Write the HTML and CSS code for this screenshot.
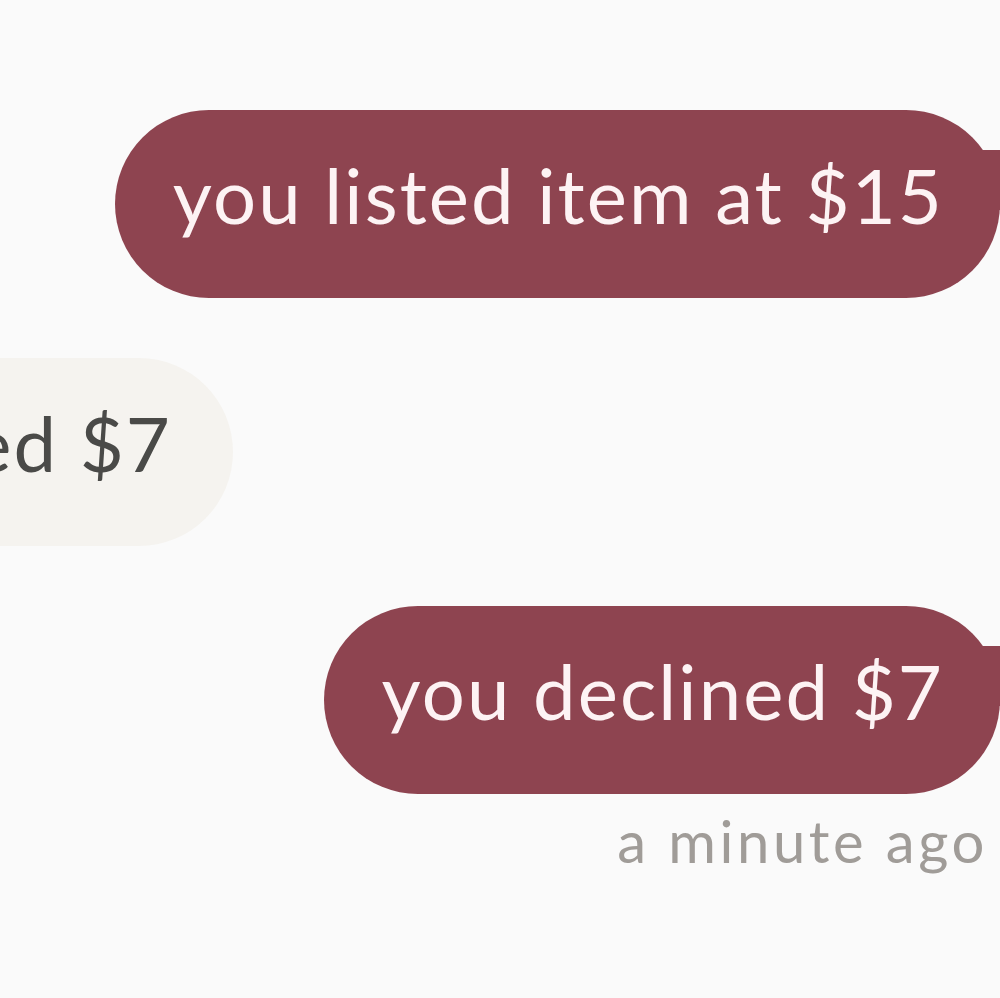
FILE: index.html
```html
<!DOCTYPE html>
<html lang="en">
<head>
  <meta charset="UTF-8">
  <title>Offer thread</title>
  <link rel="stylesheet" href="styles.css">
</head>
<body>
  <div class="thread">
    <div class="row out">
      <div class="bubble mine">you listed item at $15</div>
    </div>
    <div class="row in">
      <div class="bubble theirs">they offered $7</div>
    </div>
    <div class="row out">
      <div class="bubble mine">you declined $7</div>
    </div>
    <div class="stamp">a minute ago</div>
  </div>
</body>
</html>
```

FILE: styles.css
```css
body {
  margin: 0;
  background: #fafafa;
  font-family: Lato, "Open Sans", sans-serif;
  overflow: hidden;
}

.thread {
  display: flex;
  flex-direction: column;
  gap: 60px;
  padding-top: 110px;
}

.row {
  display: flex;
}

.row.out {
  justify-content: flex-end;
}

.row.in {
  width: 233px;
  justify-content: flex-end;
}

.bubble {
  flex-shrink: 0;
  white-space: nowrap;
  height: 188px;
  box-sizing: border-box;
  display: flex;
  align-items: center;
  padding: 0 56px 20px 58px;
  border-radius: 94px;
  font-size: 76px;
  letter-spacing: 2.1px;
  position: relative;
}

.mine {
  background: #8e4450;
  color: #fdf3f4;
}

.mine::after {
  content: "";
  position: absolute;
  right: -30px;
  top: 40px;
  width: 60px;
  height: 60px;
  background: #8e4450;
}

.theirs {
  background: #f5f3ef;
  color: #4a4a48;
  padding-right: 61px;
}

.stamp {
  align-self: flex-end;
  margin: -48px 12px 0 0;
  font-size: 58px;
  letter-spacing: 3.6px;
  color: #a09c98;
}
```
